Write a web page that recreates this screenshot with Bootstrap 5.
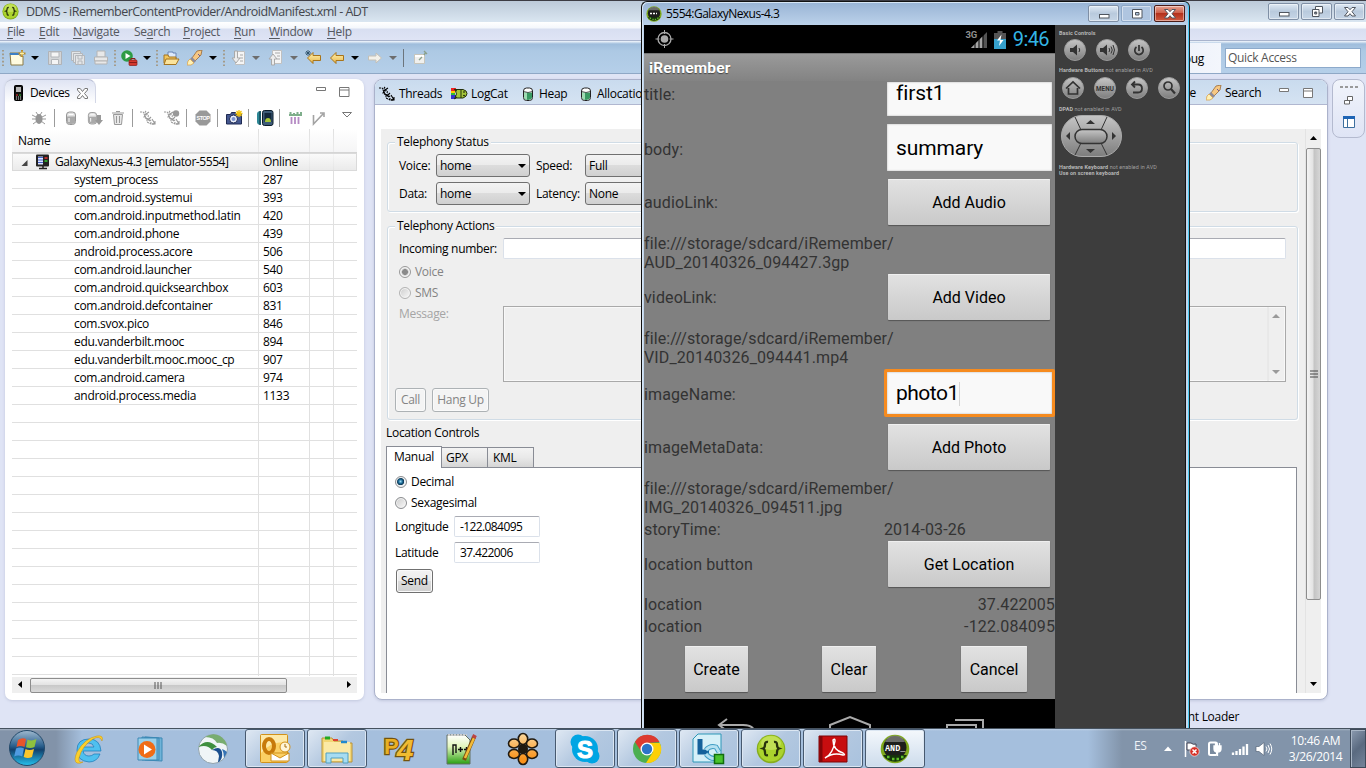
<!DOCTYPE html>
<html lang="en">
<head>
<meta charset="utf-8">
<title>DDMS - ADT</title>
<link rel="stylesheet" href="https://cdn.jsdelivr.net/npm/bootstrap@5.3.0/dist/css/bootstrap.min.css">
<style>
html,body{height:100%;overflow:hidden}
body{width:1366px;height:768px;font:12px/16px "Open Sans","Noto Sans",sans-serif;letter-spacing:-.3px;color:#000;background:#dfe4f5;white-space:nowrap}
svg{display:block;flex:none;overflow:visible}
.titlebar{height:22px;border-top:1px solid #3c3c44;background:linear-gradient(#bccad9,#dae6f1);color:#43464c;font-size:12.5px;letter-spacing:-.52px;padding-left:2px;gap:7px}
.menubar{height:19px;background:linear-gradient(#fff 0,#f4f7fc 6px,#d8dff1 7px,#dfe4f5 100%);border-bottom:1px solid #a9b4cd;color:#55585f;display:grid;grid-template-columns:32px 34px 61px 49px 51px 35px 58px 40px;padding:2px 0 0 7px;align-items:center}
.menubar u{text-underline-offset:2px}
.tool-main{height:33px;background:linear-gradient(#f4f8fd 0,#9fbddc 3px,#adc9e4 10px,#b5cfe9 100%);border-bottom:1px solid #8fa8c6}
.tool-icons{display:grid;grid-template-columns:7px 22px 16px 23px 23px 21px 7px 22px 13px 7px 24px 22px 14px 8px 21px 16px 22px 15px 24px 22px 16px 22px 14px 10px 16px;padding-left:2px;align-items:center;padding-top:2px}
.persp{width:160px;margin-top:2px;background:linear-gradient(90deg,#dfe4f5,#f3f6fc)}
.quick{width:136px;height:20px;background:#fff;border:1px solid #8daacb;color:#555;padding:0 2px;line-height:18px;margin:2px 5px 0 0}
.wb-btn{width:31px;height:17px;border:1px solid #7f8fa5;border-radius:2px;background:linear-gradient(#dfe9f4,#b9cadd 50%,#c6d5e6);box-shadow:inset 0 0 0 1px rgba(255,255,255,.45)}
.wb-btn svg{margin:1px auto 0 7px}
.wb-btn.faded{border-color:#8da7c6;background:#afc5e0}
.wb-btn.closer{background:linear-gradient(#e5a494,#cc5c46 48%,#b4311c 50%,#cf5b40);border-color:#4a1c17}
.wk{height:621px;gap:10px;padding:0 1px 0 5px;margin-top:5px}
.devices{width:359px;background:#fff;border-radius:8px 8px 7px 7px;box-shadow:0 1px 3px #c1c7dd}
.dev-tab{width:91px;height:24px;background:linear-gradient(#dfe4f3,#fff);border-radius:8px 8px 0 0;border-right:1px solid #d3d7e6;border-top:1px solid #b9bfd4;gap:7px;padding:3px 0 0 9px}
.dev-tools{height:29px;display:grid;grid-template-columns:23px 10px 23px 25px 20px 8px 24px 22px 9px 22px 9px 22px 9px 22px 10px 23px 30px 12px;padding-left:26px;align-items:center}
.vbar{width:1px;height:18px;background:#9b9b9b}
.dev-grid{margin:-3px 7px 0;height:547px;background:
 linear-gradient(#e0e0e0,#e0e0e0) 246px 0/1px 100% no-repeat,
 linear-gradient(#e0e0e0,#e0e0e0) 297px 0/1px 100% no-repeat,
 linear-gradient(#e0e0e0,#e0e0e0) 321px 0/1px 100% no-repeat,
 repeating-linear-gradient(transparent 0 17px,#e0e0e0 17px 18px) 0 24px/100% 522px no-repeat}
.dev-grid table{width:345px;table-layout:fixed;border-collapse:separate;border-spacing:0}
.dev-grid td,.dev-grid th{padding:0;height:18px;line-height:16px;font-weight:400;overflow:hidden;vertical-align:top}
.dev-grid td{padding-top:1px}
.dev-grid thead tr{background:linear-gradient(rgba(255,255,255,0),rgba(240,240,241,.7))}
.dev-grid thead th{height:24px;padding:4px 0 0 6px;border-bottom:1px solid #d5d5d5}
.dev-grid td:first-child{padding-left:62px}
.dev-grid tr.sel{background:linear-gradient(rgba(250,250,250,.8),rgba(228,228,228,.8));outline:1px solid #dadada;outline-offset:-1px}
.dev-grid tr.sel td:first-child{padding-left:9px;letter-spacing:-.43px}
.dev-grid td+td{padding-left:5px}
.hscroll{margin:1px 7px 0;height:16px;background:#efefef;padding:0 6px}
.hthumb{width:257px;height:15px;margin-left:7px;border:1px solid #8d8d8d;border-radius:2px;background:linear-gradient(#f4f4f4,#e3e3e3 45%,#c9c9c9 50%,#d9d9d9)}
.editor{width:954px;background:#fff;border:1px solid #abb2cb;border-radius:8px;box-shadow:0 1px 3px #c1c7dd;overflow:hidden}
.ed-tabs{height:25px;background:linear-gradient(#c9dbee,#d5e3f2);border-bottom:1px solid #b0b7d0}
.ed-tabs .lft{display:grid;grid-template-columns:20px 52px 20px 51px 17px 41px 17px 45px;padding-left:4px;align-items:center;padding-top:3px}
.ed-tabs .rgt{display:grid;grid-template-columns:24px 10px 19px 54px 24px 24px;align-items:center;padding-top:2px}
.ed-body{margin:24px 6px 7px;background:#efefef;height:564px}
.ed-form{width:911px;margin-left:6px;padding-top:1px}
.gbox{border:1px solid #d0dce6;border-radius:3px;box-shadow:inset 1px 1px #fff,1px 1px #fff}
.gbox>.cap{display:table;background:#efefef;padding:0 2px;margin:-9px 0 0 7px;line-height:16px}
.status{height:70px;margin-top:12px}
.status .grid4{display:grid;grid-template-columns:37px 100px 49px 94px;row-gap:5px;padding:4px 0 0 11px;align-items:center}
.sel-box{height:23px;width:94px;border:1px solid #707070;border-radius:3px;background:linear-gradient(#f3f3f3,#ebebeb 48%,#dcdcdc 50%,#d0d0d0);padding:0 3px 0 3px}
.actions{height:194px;margin-top:14px}
.fld{background:#fff;border:1px solid #dbe1ea;border-top-color:#a9abb3;border-radius:2px}
.rad{width:12px;height:12px;border:1px solid #8b8d90;border-radius:50%;background:linear-gradient(135deg,#ccc,#fafafa);box-shadow:inset 0 0 0 1px #f4f4f4}
.rad.on{background:radial-gradient(circle at 45% 45%,#9bdcf5 0,#1c6a96 2px,#0c3550 3.4px,#e8eef2 4px)}
.rad.dim{border-color:#b3b3b3}
.rad.dim.on{border-color:#999;background:radial-gradient(circle,#8a8a8a 0 2.6px,#b8b8b8 3px,#f0f0f0 4px)}
.dimmed{color:#838383}
.wbtn{height:24px;border:1px solid #707070;border-radius:3px;background:linear-gradient(#f3f3f3,#ebebeb 48%,#dcdcdc 50%,#d0d0d0);box-shadow:inset 0 0 0 1px #fafafa;text-align:center;line-height:22px}
.wbtn.off{background:#f4f4f4;border-color:#adb2b5;color:#838383}
.msg{width:783px;height:76px;border:1px solid #a9a9a9;margin-top:-1px;box-shadow:inset 0 0 0 1px #f8f8f8;padding:0 1px}
.loc-tab{height:20px;width:47px;border:1px solid #898c95;border-bottom:0;background:linear-gradient(#f3f3f3,#e9e9e9 50%,#d5d5d5);padding-left:4px;line-height:20px;margin-left:-1px}
.loc-tab.cur{height:22px;width:56px;background:#fff;position:relative;margin:0 0 -1px -1px;padding-left:7px;line-height:19px}
.loc-pane{height:226px;width:911px;margin-left:-1px;background:#fff;border:1px solid #898c95;border-bottom:0;padding:6px 0 0 8px}
.vscroll{width:16px;background:#efefef;margin-left:auto;border-left:1px solid #e3e3e3;padding-top:7px}
.vthumb{width:15px;height:452px;margin-top:7px;border:1px solid #8d8d8d;border-radius:2px;background:linear-gradient(90deg,#f4f4f4,#e3e3e3 45%,#c4c4c4 55%,#d6d6d6)}
.fast{width:33px;height:59px;border:1px solid #b4bacf;border-radius:8px;margin-left:-6px;background:linear-gradient(#f1f4fb,#dfe4f5);gap:7px;padding-top:6px}
.statusline{height:28px;padding:9px 127px 0 0}
/* emulator window */
.emu{position:absolute;left:641px;top:1px;width:549px;height:727px;border:1px solid #111;border-bottom:0;border-radius:6px 6px 0 0;background:linear-gradient(#98b3d4,#bdd3eb 24px,#c8daee);border-right-color:#222;box-shadow:inset -1px 0 #47c8f2,inset 1px 1px #d6e5f4;padding:0 2px;overflow:hidden}
.emu-bar{height:23px;gap:4px;padding:0 2px;letter-spacing:-.53px}
.phone{width:411px;height:703px;background:#808080;font-family:Roboto,sans-serif;font-size:16px;line-height:18.6px;letter-spacing:.12px;color:#333}
.droidbar{height:28px;background:#000;color:#33b5e5;font-size:20px;letter-spacing:-.3px;padding:1px 6px 0 11px}
.apptitle{height:28px;background:linear-gradient(#9a9a9a,#838383);border-top:1px solid #777;color:#fff;font-weight:700;font-size:15.5px;line-height:28px;padding-left:5px;text-shadow:0 1px 1px #444}
.prow{height:54px;display:grid;grid-template-columns:243px 1fr;align-items:center}
.prow>span{padding-top:2px}
.dbtn{height:46px;width:162px;margin-left:1px;background:linear-gradient(#e2e2e2,#c9c9c9);box-shadow:0 1px 1px #555,inset 0 1px #efefef;color:#000;text-align:center;line-height:47px;border-radius:1px;letter-spacing:0}
.dfld{height:47px;width:165px;background:#f9f9f9;color:#000;font-size:21px;letter-spacing:-.1px;line-height:48px;padding-left:9px;box-shadow:inset 0 0 2px #aaa}
.dfld.focus{height:48px;width:171px;margin-left:-3px;border:3px solid #f68b1f;border-radius:2px;line-height:42px;padding-left:9px;letter-spacing:-.5px}
.caretline{display:inline-block;width:1px;height:24px;background:#d5d5d5;vertical-align:middle}
.pfile{height:41px;padding-top:6px}
.acts{height:47px;display:grid;grid-template-columns:137px 139px 70px;padding-left:41px}
.acts .dbtn{margin:0}
.navkeys{height:29px;background:#000;margin-top:6px;overflow:hidden;display:grid;grid-template-columns:113px 116px 60px;padding-left:72px}
.side{width:131px;background:#3d3d3d;border-right:1px solid #111;font:bold 5.4px/8px Roboto,sans-serif;letter-spacing:.1px;color:#b8b8b8;padding:4px 0 0 4px}
.side span{font-weight:400;color:#a0a0a0}
.side .keys{display:flex;gap:10px}
/* taskbar */
.taskbar{position:relative;height:40px;border-top:1px solid #46525f;background:linear-gradient(rgba(255,255,255,.3),transparent 2px),linear-gradient(90deg,#8293a9 0,#8293a9 56px,#a5bfdd 82px,#a5bfdd 1088px,#8294aa 1122px);color:#fff}
.orb{width:58px;padding-left:8px}
.task{width:62px;height:39px;display:flex;align-items:center;justify-content:center}
.task.run{width:60px;margin:0 1px;border:1px solid #47596f;border-radius:3px;background:linear-gradient(135deg,#dfe8f3,#b3c8e0 50%,#a9c2de);box-shadow:inset 0 0 0 1px #dbe6f2}
.task.act{background:linear-gradient(#f4f8fc,#cddcec)}
.tray{display:grid;grid-template-columns:30px 17px 24px 24px 24px 24px 73px 16px;align-items:center}
.peek{height:39px;border:1px solid #3e4a5a;box-shadow:inset 1px 1px #a9b6c6;background:linear-gradient(135deg,#8c9bb0,#5a6a80 50%,#74849a)}
</style>
</head>
<body>
<svg width="0" height="0" class="position-absolute">
 <defs>
  <linearGradient id="gKey" x2="0" y2="1"><stop offset="0" stop-color="#c6c6c6"/><stop offset="1" stop-color="#7d7d7d"/></linearGradient>
  <linearGradient id="gGold" x2="0" y2="1"><stop offset="0" stop-color="#fff3b0"/><stop offset="1" stop-color="#e8b54a"/></linearGradient>
  <linearGradient id="gOrb" x2="0" y2="1"><stop offset="0" stop-color="#9fb9cf"/><stop offset=".45" stop-color="#285e8c"/><stop offset=".55" stop-color="#12406c"/><stop offset="1" stop-color="#25c2ef"/></linearGradient>
  <linearGradient id="gGreen" x2="0" y2="1"><stop offset="0" stop-color="#fff"/><stop offset=".4" stop-color="#e2f6bd"/><stop offset="1" stop-color="#2aa012"/></linearGradient>
  <linearGradient id="gFlow" gradientUnits="userSpaceOnUse" x1="0" x2="0" y1="-15" y2="10"><stop offset="0" stop-color="#fbd79c"/><stop offset="1" stop-color="#f9921a"/></linearGradient>
  <symbol id="caret" viewBox="0 0 8 16"><path d="M0 6h8L4 10z" fill="currentColor"/></symbol>
  <symbol id="dots" viewBox="0 0 2 16"><path d="M1 0v16" stroke="#a08f74" stroke-width="1.6" stroke-dasharray="1.6 2"/></symbol>
  <symbol id="back" viewBox="0 0 16 16"><path d="M1.500 8 7 2.500v3h7.500v5H7v3z" fill="url(#gGold)" stroke="#a8741a"/></symbol>
  <symbol id="rocket" viewBox="0 0 16 16"><path d="M10 1l5-1-1 5-6 6-3-3z" fill="#f6c884" stroke="#9a6a35" stroke-width=".8"/><path d="M5 7l4 4-2 2-4-4z" fill="#8e8c9a"/><path d="M3 9l4 4-3 2-4 0 1-4z" fill="#fff1b5" stroke="#d99b3e" stroke-width=".7"/><path d="M11 4l2 2" stroke="#6b5a9a"/></symbol>
  <symbol id="threads" viewBox="0 0 16 16"><g fill="none" stroke="currentColor" stroke-width="1.1"><path d="M0 2h3l3 3-2 2 3 2v3l4 2h4M6 1c-3 3 4 3 2 6s4 2 3 5 2 2 4 1" stroke-dasharray="2 .8"/><path d="M9 2l-3 2M4 4l2 4 4 3M12 9l3 5M15 11v3h-3M8 10l3-3"/></g></symbol>
  <symbol id="can" viewBox="0 0 12 16"><rect x="1.500" y="2" width="9" height="12.500" rx="3" fill="#fff" stroke="#222"/><path d="M2 6.500h8V12q-1 2-4 2t-4-2z" fill="#3a9a63"/><path d="M2 7h3v6.500q-2 0-3-2z" fill="#9fdcb4"/><path d="M2 5.500q4 2 8 0" stroke="#222" fill="none" stroke-width=".7"/></symbol>
  <symbol id="greycan" viewBox="0 0 12 16"><rect x="1.500" y="2" width="9" height="12.500" rx="3" fill="#e2e2e2" stroke="#969696"/><path d="M2 6.500h8V13q-4 2-8 0z" fill="#aaa"/><path d="M3.500 4.500h5M4 8v4" stroke="#fff"/></symbol>
  <symbol id="braces" viewBox="0 0 30 30"><circle cx="15" cy="15" r="14.300" fill="#86ad1d"/><circle cx="15" cy="14.500" r="13" fill="#abd32d"/><ellipse cx="15" cy="9" rx="10" ry="7" fill="#d0ea70" opacity=".6"/><path d="M12 8q-3-.5-3 2.500c0 3-.5 3.500-2 4 1.500.5 2 1 2 4 0 3 1 3 3 2.700M18 8q3-.5 3 2.500c0 3 .5 3.500 2 4-1.500.5-2 1-2 4 0 3-1 3-3 2.700" fill="none" stroke="#29330c" stroke-width="2.300"/></symbol>
  <symbol id="emulogo" viewBox="0 0 30 30"><circle cx="15" cy="15" r="14.300" fill="#7faa1c"/><circle cx="15" cy="13.500" r="11.500" fill="#1d1f1c"/><path d="M5 8a11 11 0 0 1 20 0z" fill="#8b8d8a" opacity=".7"/><path d="M3 21h24a14 14 0 0 1-24 0z" fill="#15330c"/><path d="M7 23h2.500M12 25h2.500M16.500 25H19M21 23h2.500" stroke="#5fbf2a" stroke-width="2.500"/></symbol>
  <symbol id="wmin" viewBox="0 0 16 14"><rect x="3.500" y="7.500" width="9.500" height="3.500" fill="#fff" stroke="#50565f"/></symbol>
  <symbol id="wmax" viewBox="0 0 16 14"><path d="M3.500 2.500h9.500v8.500H3.500zM6.500 5.500h3.500v2.500H6.500z" fill="#fff" fill-rule="evenodd" stroke="#50565f"/></symbol>
  <symbol id="wres" viewBox="0 0 16 14"><path d="M6.500 1.500h7v6.500h-7z" fill="#fff" stroke="#50565f"/><path d="M3.500 4.500h6.500v7H3.500zM5.700 7h2v2h-2z" fill="#fff" fill-rule="evenodd" stroke="#50565f"/></symbol>
  <symbol id="wx" viewBox="0 0 16 14"><path d="M2.500 2.500h3.500L8 4.700l2-2.200h3.500L10 6.700l3.500 4.300H10L8 8.700 6 11H2.500L6 6.700z" fill="#fff" stroke="#50565f"/></symbol>
 </defs>
</svg>

<div class="titlebar d-flex align-items-center">
 <svg width="17" height="17"><use href="#braces"/></svg><span>DDMS - iRememberContentProvider/AndroidManifest.xml - ADT</span>
 <div class="d-flex ms-auto" style="gap:2px;margin-right:1px">
  <div class="wb-btn"><svg width="16" height="14"><use href="#wmin"/></svg></div>
  <div class="wb-btn"><svg width="16" height="14"><use href="#wres"/></svg></div>
  <div class="wb-btn"><svg width="16" height="14"><use href="#wx"/></svg></div>
 </div>
</div>
<div class="menubar"><span><u>F</u>ile</span><span><u>E</u>dit</span><span><u>N</u>avigate</span><span>Se<u>a</u>rch</span><span><u>P</u>roject</span><span><u>R</u>un</span><span><u>W</u>indow</span><span><u>H</u>elp</span></div>
<div class="tool-main d-flex justify-content-between">
 <div class="tool-icons">
  <svg width="2" height="16"><use href="#dots"/></svg>
  <svg width="16" height="16"><path d="M1 3h10v3h3v9H2z" fill="#fffbe0" stroke="#8b7a46"/><path d="M1 3h9v2H1z" fill="#3d7fc4"/><path d="M13 0v7M9.500 3.500h7" stroke="#b58a2e" stroke-width="2"/><path d="M13 1.500v4M11 3.500h4" stroke="#fff3a0"/></svg>
  <svg width="8" height="16"><use href="#caret"/></svg>
  <svg width="16" height="16"><path d="M1.500 1.500h13v13h-13z" fill="#d4d6d8" stroke="#b0b3b7"/><path d="M4 2h8v5H4zM4.500 9.500h7v5h-7z" fill="#f5f5f5" stroke="#b2b5b9"/></svg>
  <svg width="16" height="16" fill="#e3e5e7" stroke="#b4b7bb"><path d="M1.500 1.500h9v9h-9z"/><path d="M3.500 3.500h9v9h-9z"/><path d="M5.500 5.500h9v9h-9z"/><path d="M8 6v3h4V6M8 14v-3h4v3"/></svg>
  <svg width="16" height="16" fill="#e8e8e8" stroke="#b4b4b4"><path d="M4 1h8v6H4z"/><path d="M1.500 7h13v4h-13z"/><path d="M2 11h12v3H2z"/></svg>
  <svg width="2" height="16"><use href="#dots"/></svg>
  <svg width="17" height="16"><circle cx="6" cy="6" r="5.800" fill="#2d9b45"/><path d="M4.500 3l5 3-5 3z" fill="#fff"/><rect x="8" y="10" width="8" height="5.500" rx="1" fill="#d3392f" stroke="#8a1d18" stroke-width=".7"/><path d="M10 10V8.500h4V10M8 12.500h8" stroke="#8a1d18" fill="none"/></svg>
  <svg width="8" height="16"><use href="#caret"/></svg>
  <svg width="2" height="16"><use href="#dots"/></svg>
  <svg width="16" height="16"><path d="M5 5V2h5v1h3v6H5z" fill="#dce9fa" stroke="#6984b5"/><path d="M1 5h4l1 2h7v6H1z" fill="#f2c65c" stroke="#a57520"/><path d="M3 9h13l-3 5.500H1z" fill="#fbe39b" stroke="#a57520"/></svg>
  <svg width="16" height="16"><use href="#rocket"/></svg>
  <svg width="8" height="16"><use href="#caret"/></svg>
  <svg width="2" height="16"><use href="#dots"/></svg>
  <svg width="16" height="16"><path d="M4.500 1.500h9v13h-9z" fill="#f5f5f5" stroke="#c0c0c0"/><path d="M9 5h3M9 8h3M9 11h3" stroke="#a9a9a9"/><path d="M3.500 1h3v7H9l-4 5-4-5h2.500z" fill="#ececec" stroke="#a9a9a9"/></svg>
  <svg width="8" height="16" color="#6d6d6d"><use href="#caret"/></svg>
  <svg width="16" height="16"><path d="M4.500.5h9v13h-9z" fill="#f5f5f5" stroke="#c0c0c0"/><path d="M7 3h5M9 6h3M9 9h3" stroke="#a9a9a9"/><path d="M3.500 15h3V9H9L5 4 1 9h2.500z" fill="#ececec" stroke="#a9a9a9"/></svg>
  <svg width="8" height="16" color="#6d6d6d"><use href="#caret"/></svg>
  <svg width="17" height="16"><use href="#back" x="1" width="16" height="16"/><path d="M3 0v6M0 3h6M1 1l4 4M5 1L1 5" stroke="#23485f" stroke-width=".8"/></svg>
  <svg width="16" height="16"><use href="#back"/></svg>
  <svg width="8" height="16"><use href="#caret"/></svg>
  <svg width="16" height="16"><path d="M14.500 8 9 3v3H1.500v4H9v3z" fill="#f3f1ea" stroke="#c4c0b6"/></svg>
  <svg width="8" height="16" color="#6d6d6d"><use href="#caret"/></svg>
  <span class="vbar bg-secondary"></span>
  <svg width="16" height="16"><path d="M1.500 4.500h10v9h-10z" fill="#f0f0ee" stroke="#c7c5bb"/><path d="M2 6h9" stroke="#fff" stroke-width="2"/><path d="M6 10l3-3M11 5l2-3M11 1l3 3" stroke="#8ba08c" stroke-width="1.400"/></svg>
 </div>
 <div class="d-flex">
  <div class="persp d-flex"><span class="ms-auto mt-2" style="padding-right:17px">Debug</span></div>
  <div class="d-flex align-items-center ps-1"><div class="quick">Quick Access</div></div>
 </div>
</div>

<div class="wk d-flex">
 <section class="devices">
  <div class="d-flex justify-content-between">
   <div class="dev-tab d-flex align-items-center">
    <svg width="9" height="16"><rect x=".5" y=".5" width="8" height="15" rx="1" fill="#111" stroke="#000"/><path d="M2 2h5v5H2z" fill="#b9b9b9"/><path d="M2 10h2" stroke="#e33"/><path d="M5 10h2" stroke="#3c3"/><path d="M2 12h5M2 14h5" stroke="#ddd" stroke-dasharray="1 1"/></svg>
    <span style="letter-spacing:-.45px">Devices</span>
    <svg width="11" height="11"><path d="M.5.5h2.700L5.500 3.500 7.800.5h2.700v1.500L7.500 5.500l3 3.500v1.500H7.800L5.500 7.500l-2.300 3H.5V9l3-3.500-3-3.500z" fill="#fff" stroke="#777"/></svg>
   </div>
   <svg width="48" height="24"><path d="M.5 8.500h9v3h-9zM23.500 8.500h9.500v9h-9.500zM23.500 11h9.500" fill="#fff" stroke="#777"/></svg>
  </div>
  <div class="dev-tools">
   <svg width="16" height="16"><path d="M5 2l2 3M11 2L9 5M1 5l4 2M15 5l-4 2M1 9h14M2 14l4-3M14 14l-4-3" stroke="#999"/><ellipse cx="8" cy="9" rx="3.500" ry="5" fill="#949494"/></svg>
   <span class="vbar"></span>
   <svg width="14" height="16"><use href="#greycan"/></svg>
   <svg width="16" height="16"><use href="#greycan" width="11"/><path d="M10 5h4v5h2l-4 5-4-5h2z" fill="#999"/></svg>
   <svg width="12" height="16"><path d="M1.500 4.500h9l-1 10h-7zM0 3h12M4 1.500h4M4.500 6v7M7.500 6v7" fill="#e8e8e8" stroke="#999"/></svg>
   <span class="vbar"></span>
   <svg width="16" height="16" color="#999"><use href="#threads"/></svg>
   <svg width="16" height="16" color="#999"><use href="#threads"/><circle cx="12" cy="3.500" r="3.200" fill="#999"/></svg>
   <span class="vbar"></span>
   <svg width="16" height="16"><path d="M4.500.5h7l4 4v7l-4 4h-7l-4-4v-7z" fill="#999"/><text x="1.500" y="10.300" font-size="5.500" font-weight="700" fill="#fff" font-family="Liberation Sans,sans-serif" textLength="13">STOP</text></svg>
   <span class="vbar"></span>
   <svg width="16" height="16"><path d="M.5 4.500h4l1-2h4l1 2h5v9.500H.5z" fill="#44578f" stroke="#1f2a52"/><circle cx="7.500" cy="9" r="4" fill="#eef2fb" stroke="#1f2a52"/><circle cx="7.500" cy="9" r="2" fill="#7b93cf"/><path d="M13 0v7M9.500 3.500h7M10.500 1l5 5M15.500 1l-5 5" stroke="#f2c40e" stroke-width="1.300"/></svg>
   <span class="vbar"></span>
   <svg width="17" height="16"><path d="M4 1Q0 1 0 4v8q0 3 4 3z" fill="#2c8795"/><path d="M3 1v14" stroke="#0b2b3b"/><rect x="5.500" y=".5" width="10.500" height="15" rx="2" fill="#3e5c78" stroke="#0b1c2b"/><path d="M7.500 3h7v9h-7z" fill="#13283d"/><path d="M8 12q0-4 3-4t3 4z" fill="#a4c639"/></svg>
   <span class="vbar"></span>
   <svg width="14" height="16"><path d="M1.500 2v4M5 3v3M8.500 2v4M12 2v4M0 5h13" stroke="#7fae8b" stroke-width="2"/><path d="M2.500 7v7M6 7v7M9.500 7v7" stroke="#b58ac4" stroke-width="1.800"/></svg>
   <svg width="14" height="16"><path d="M1.500 5v9L11 4M8 3h4v4" fill="none" stroke="#a3a3a3" stroke-width="1.600"/></svg>
   <svg width="10" height="16"><path d="M.5 2.500h9L5 7z" fill="#fff" stroke="#777"/></svg>
  </div>
  <div class="dev-grid">
   <table>
    <colgroup><col style="width:246px"><col></colgroup>
    <thead><tr><th>Name</th><th></th></tr></thead>
    <tbody>
     <tr class="sel"><td><div class="d-flex align-items-center"><svg width="7" height="7"><path d="M6.500 1v6H.5z" fill="#444"/></svg><svg width="16" height="16" style="margin:0 4px 0 7px"><rect x="1" y=".5" width="13" height="12" rx="1" fill="#222"/><path d="M3 2.500h5v8H3z" fill="#dfe6ff"/><path d="M3 3.500h5M3 6h5M3 8.500h5" stroke="#4560c9"/><path d="M9.500 4h3" stroke="#e33" stroke-width="1.500"/><path d="M9.500 7h3" stroke="#3c3" stroke-width="1.500"/><path d="M4 14.500h8M8 12v2" stroke="#222" stroke-width="1.500"/></svg><span>GalaxyNexus-4.3 [emulator-5554]</span></div></td><td>Online</td></tr>
     <tr><td>system_process</td><td>287</td></tr>
     <tr><td>com.android.systemui</td><td>393</td></tr>
     <tr><td>com.android.inputmethod.latin</td><td>420</td></tr>
     <tr><td>com.android.phone</td><td>439</td></tr>
     <tr><td>android.process.acore</td><td>506</td></tr>
     <tr><td>com.android.launcher</td><td>540</td></tr>
     <tr><td>com.android.quicksearchbox</td><td>603</td></tr>
     <tr><td>com.android.defcontainer</td><td>831</td></tr>
     <tr><td>com.svox.pico</td><td>846</td></tr>
     <tr><td>edu.vanderbilt.mooc</td><td>894</td></tr>
     <tr><td>edu.vanderbilt.mooc.mooc_cp</td><td>907</td></tr>
     <tr><td>com.android.camera</td><td>974</td></tr>
     <tr><td>android.process.media</td><td>1133</td></tr>
    </tbody>
   </table>
  </div>
  <div class="hscroll d-flex align-items-center">
   <svg width="5" height="8"><path d="M4 0v7L0 3.500z"/></svg>
   <div class="hthumb d-flex align-items-center justify-content-center"><svg width="9" height="7"><path d="M1 0v7M4 0v7M7 0v7" stroke="#555"/></svg></div>
   <svg width="5" height="8" class="ms-auto"><path d="M1 0v7l4-3.500z"/></svg>
  </div>
 </section>

 <section class="editor">
  <div class="ed-tabs d-flex justify-content-between">
   <div class="lft">
    <svg width="16" height="16"><use href="#threads"/></svg><span>Threads</span>
    <svg width="17" height="16"><path d="M0 2h5v3H0z" fill="#e22"/><path d="M0 5h4v2H0z" fill="#fc0"/><path d="M0 7h4v2H0z" fill="#3b3"/><path d="M0 9h5v4H0z" fill="#33c"/><path d="M4 3.500h8q4 1 4 4t-4 4.500H4q3-4 0-8.500z" fill="#a4c639" stroke="#22300a"/><path d="M3 3l3 2M3 13l3-2M10 4v8" stroke="#22300a"/><circle cx="13" cy="6" r=".8"/><circle cx="13" cy="9.500" r=".8"/></svg><span>LogCat</span>
    <svg width="12" height="16"><use href="#can"/></svg><span>Heap</span>
    <svg width="12" height="16"><use href="#can"/></svg><span>Allocatio</span>
   </div>
   <div class="rgt">
    <span class="text-end">e</span><span></span><svg width="16" height="16"><use href="#rocket"/></svg><span>Search</span>
    <svg width="10" height="16"><path d="M.5 3.500h9v3h-9z" fill="#fff" stroke="#777"/></svg>
    <svg width="10" height="16"><path d="M.5 3.500h9v9h-9zM.5 6h9" fill="#fff" stroke="#777"/></svg>
   </div>
  </div>
  <div class="ed-body d-flex">
   <div class="ed-form">
    <div class="gbox status">
     <div class="cap">Telephony Status</div>
     <div class="grid4">
      <span>Voice:</span><div class="sel-box d-flex align-items-center justify-content-between">home<svg width="8" height="16"><use href="#caret"/></svg></div><span>Speed:</span><div class="sel-box d-flex align-items-center justify-content-between">Full<svg width="8" height="16"><use href="#caret"/></svg></div>
      <span>Data:</span><div class="sel-box d-flex align-items-center justify-content-between">home<svg width="8" height="16"><use href="#caret"/></svg></div><span>Latency:</span><div class="sel-box d-flex align-items-center justify-content-between">None<svg width="8" height="16"><use href="#caret"/></svg></div>
     </div>
    </div>
    <div class="gbox actions">
     <div class="cap">Telephony Actions</div>
     <div class="d-flex align-items-center" style="padding:4px 0 0 11px"><span style="width:104px">Incoming number:</span><div class="fld" style="width:783px;height:21px"></div></div>
     <div class="d-flex align-items-center dimmed gap-1" style="padding-left:11px;height:26px"><i class="rad dim on"></i>Voice</div>
     <div class="d-flex align-items-center dimmed gap-1" style="padding-left:11px;height:16px"><i class="rad dim"></i>SMS</div>
     <div class="d-flex" style="padding:6px 0 0 11px"><span style="width:104px;color:#a5a5a5;margin-top:-1px">Message:</span>
      <div class="msg d-flex"><svg width="16" height="74" class="ms-auto"><path d="M0 0v74" stroke="#e2e2e2"/><path d="M4 11h8L8 7z" fill="#999"/><path d="M4 63h8l-4 4z" fill="#999"/></svg></div></div>
     <div class="d-flex" style="padding:6px 0 0 7px;gap:6px"><div class="wbtn off" style="width:31px">Call</div><div class="wbtn off" style="width:57px">Hang Up</div></div>
    </div>
    <div style="margin:5px 0 5px -1px">Location Controls</div>
    <div class="d-flex align-items-end"><div class="loc-tab cur">Manual</div><div class="loc-tab">GPX</div><div class="loc-tab" style="width:47px;padding-left:5px">KML</div></div>
    <div class="loc-pane">
     <div class="d-flex align-items-center gap-1" style="height:16px"><i class="rad on"></i>Decimal</div>
     <div class="d-flex align-items-center gap-1" style="height:26px"><i class="rad"></i>Sexagesimal</div>
     <div class="d-flex align-items-center"><span style="width:59px">Longitude</span><div class="fld" style="width:86px;height:21px;line-height:20px;letter-spacing:-.6px;padding-left:5px">-122.084095</div></div>
     <div class="d-flex align-items-center" style="margin-top:5px"><span style="width:59px">Latitude</span><div class="fld" style="width:86px;height:21px;line-height:20px;letter-spacing:-.6px;padding-left:5px">37.422006</div></div>
     <div class="wbtn" style="width:37px;margin:6px 0 0 1px">Send</div>
    </div>
   </div>
   <div class="vscroll d-flex flex-column align-items-center">
    <svg width="8" height="5"><path d="M0 4h7L3.500 0z"/></svg>
    <div class="vthumb d-flex align-items-center justify-content-center"><svg width="8" height="9"><path d="M0 1h8M0 4h8M0 7h8" stroke="#444"/></svg></div>
    <svg width="8" height="5" class="mt-auto" style="margin-bottom:6px"><path d="M0 0h7L3.500 4z"/></svg>
   </div>
  </div>
 </section>
 <div class="fast d-flex flex-column align-items-center">
  <svg width="18" height="3"><path d="M0 1h18" stroke="#9a9a9a" stroke-width="2" stroke-dasharray="3 2"/></svg>
  <svg width="9" height="9"><path d="M3.500.5h5v4h-5zM.5 4.500h5v3.500h-5z" fill="#fff" stroke="#666"/></svg>
  <svg width="12" height="12" class="mt-1"><path d="M.5.500h11v11H.5z" fill="#fff" stroke="#3d6f9e"/><path d="M0 1.500h12" stroke="#1e64b4" stroke-width="3"/><path d="M4.500 3v8.500" stroke="#3d6f9e"/></svg>
 </div>
</div>
<div class="statusline text-end">nt Loader</div>

<section class="emu">
 <div class="emu-bar d-flex align-items-center">
  <svg width="16" height="16"><use href="#emulogo"/><path d="M4 7.500h7" stroke="#fff" stroke-width="1.500" stroke-dasharray="2 1"/></svg><span>5554:GalaxyNexus-4.3</span>
  <div class="d-flex ms-auto" style="gap:2px"><div class="wb-btn"><svg width="16" height="14"><use href="#wmin"/></svg></div><div class="wb-btn faded"><svg width="16" height="14"><use href="#wmax"/></svg></div><div class="wb-btn closer"><svg width="16" height="14"><use href="#wx"/></svg></div></div>
 </div>
 <div class="d-flex">
  <div class="phone">
   <div class="droidbar d-flex align-items-center">
    <svg width="20" height="20"><circle cx="9.500" cy="9" r="6.500" fill="none" stroke="#aaa" stroke-width="1.300"/><circle cx="9.500" cy="9" r="3.800" fill="#aaa"/><path d="M9.500 0v4M9.500 14v4M.5 9h4M14.500 9h4" stroke="#aaa"/></svg>
    <span class="ms-auto" style="font-size:9.500px;font-weight:700;color:#8f8f8f;margin-top:-9px">3G</span>
    <svg width="17" height="18" style="margin-left:-6px"><path d="M16 1v16H0z" fill="#555"/><path d="M11.500 5.500V17H0z" fill="#a5a5a5"/><path d="M4 10v7M8 6v11M12 2v15" stroke="#000"/></svg>
    <svg width="12" height="18" style="margin:0 7px 0 6px"><path d="M3.500 0h5v2H12v6H0V2h3.500z" fill="#555"/><path d="M0 8h12v10H0z" fill="#35a0cc"/><path d="M7.500 3.500L3 9.500h3L5 15l4.500-6h-3z" fill="#fff"/></svg>
    <span style="letter-spacing:-.6px">9:46</span>
   </div>
   <div class="apptitle">iRemember</div>
   <div class="prow" style="height:39px;align-items:start"><span style="margin-top:3px">title:</span><div class="dfld" style="height:34px;line-height:22px;margin-top:1px">first1</div></div>
   <div class="prow" style="height:55px"><span style="padding-top:6px">body:</span><div class="dfld">summary</div></div>
   <div class="prow"><span>audioLink:</span><div class="dbtn">Add Audio</div></div>
   <div class="pfile">file:///storage/sdcard/iRemember/<br>AUD_20140326_094427.3gp</div>
   <div class="prow"><span>videoLink:</span><div class="dbtn">Add Video</div></div>
   <div class="pfile" style="height:42px">file:///storage/sdcard/iRemember/<br>VID_20140326_094441.mp4</div>
   <div class="prow"><span class="pt-1">imageName:</span><div class="dfld focus">photo1<i class="caretline"></i></div></div>
   <div class="prow"><span>imageMetaData:</span><div class="dbtn">Add Photo</div></div>
   <div class="pfile" style="height:45px">file:///storage/sdcard/iRemember/<br>IMG_20140326_094511.jpg</div>
   <div class="prow" style="height:19px;grid-template-columns:240px 1fr"><span>storyTime:</span><span>2014-03-26</span></div>
   <div class="prow" style="height:52px"><span>location button</span><div class="dbtn">Get Location</div></div>
   <div class="d-flex justify-content-between" style="padding-top:6px;height:28px"><span>location</span><span>37.422005</span></div>
   <div class="d-flex justify-content-between" style="height:28px"><span>location</span><span>-122.084095</span></div>
   <div class="acts"><div class="dbtn" style="width:63px">Create</div><div class="dbtn" style="width:54px">Clear</div><div class="dbtn" style="width:66px">Cancel</div></div>
   <div class="navkeys">
    <svg width="40" height="29"><path d="M11 20L3 26l8 6M3 26h24q9 0 11 5" fill="none" stroke="#aaa" stroke-width="2"/></svg>
    <svg width="42" height="29"><path d="M1 31v-5L21 18l20 8v5" fill="none" stroke="#aaa" stroke-width="2"/></svg>
    <svg width="42" height="29"><path d="M10 21h28v12M2 34v-8h29v8" fill="none" stroke="#aaa" stroke-width="2"/></svg>
   </div>
  </div>
  <div class="side">
   Basic Controls
   <div class="keys" style="margin:2px 0 8px 5px">
    <svg width="22" height="22"><circle cx="11" cy="11" r="10.500" fill="url(#gKey)" stroke="#999"/><path d="M6 9h3l4-3.500v11L9 13H6z" fill="#333"/><path d="M15 9q1.500 2 0 4" fill="none" stroke="#333"/></svg>
    <svg width="22" height="22"><circle cx="11" cy="11" r="10.500" fill="url(#gKey)" stroke="#999"/><path d="M4 9h3l4-3.500v11L7 13H4z" fill="#333"/><path d="M13 9q1.500 2 0 4M15 7.500q2.500 3.500 0 7M17 6q3 5 0 10" fill="none" stroke="#333"/></svg>
    <svg width="22" height="22"><circle cx="11" cy="11" r="10.500" fill="url(#gKey)" stroke="#999"/><path d="M11 6v6M8.500 8a4.200 4.200 0 1 0 5 0" fill="none" stroke="#333" stroke-width="1.700"/></svg>
   </div>
   <div style="margin-top:-3px">Hardware Buttons <span>not enabled in AVD</span></div>
   <div class="keys" style="margin:3px 0 0 3px">
    <svg width="22" height="22"><circle cx="11" cy="11" r="10.500" fill="url(#gKey)" stroke="#999"/><path d="M4 11.500L11 5l7 6.500M6.500 11v6h9v-6" fill="none" stroke="#333" stroke-width="1.700"/></svg>
    <svg width="22" height="22"><circle cx="11" cy="11" r="10.500" fill="url(#gKey)" stroke="#999"/><text x="2" y="13.500" font-size="7" font-weight="700" fill="#333" textLength="18" lengthAdjust="spacingAndGlyphs">MENU</text></svg>
    <svg width="22" height="22"><circle cx="11" cy="11" r="10.500" fill="url(#gKey)" stroke="#999"/><path d="M9 4.500L6 7.500l3 3M6 7.500h6q4 0 4 4t-4 4H7" fill="none" stroke="#333" stroke-width="1.800"/></svg>
    <svg width="22" height="22"><circle cx="11" cy="11" r="10.500" fill="url(#gKey)" stroke="#999"/><circle cx="10" cy="9" r="4" fill="none" stroke="#333" stroke-width="1.700"/><path d="M13 12l4 4.500" stroke="#333" stroke-width="2.200"/></svg>
   </div>
   <div style="margin-top:6px">DPAD <span>not enabled in AVD</span></div>
   <svg width="61" height="43" style="margin:2px 0 5px 2px"><rect x=".5" y=".5" width="60" height="41" rx="20.500" fill="url(#gKey)" stroke="#aaa"/><path d="M14 2l6 13M46 2l-6 13M14 40l6-12M46 40l-6-12" stroke="#333"/><rect x="14" y="14.500" width="32" height="14" rx="7" fill="url(#gKey)" stroke="#333" stroke-width="1.500"/><path d="M25 9h9l-4.500-4zM25 34h9l-4.500 4zM9 17v8l-4-4zM51 17v8l4-4z" fill="#333"/></svg>
   <div style="line-height:6px;margin-top:6px">Hardware Keyboard <span>not enabled in AVD</span><br>Use on screen keyboard</div>
  </div>
 </div>
</section>

<footer class="taskbar d-flex">
 <div class="orb"><svg width="38" height="38"><circle cx="19" cy="19" r="17.500" fill="url(#gOrb)" stroke="#244a6b"/><path d="M10 11q4-3 8-1l-1.500 8q-4-2-8 0z" fill="#e8552b"/><path d="M19.500 10.500q4 2 9-.5l-2 8q-4 2-8.500.3z" fill="#8fc13e"/><path d="M8 19.500q4-2 8 0l-1.800 8q-4-2-8 0z" fill="#4f9be0"/><path d="M17.500 20q4 2 8.500 0l-2 8q-4 2-8.300 0z" fill="#fbc72d"/></svg></div>
 <div class="task"><svg width="32" height="32"><path d="M28 18H10q1 5 6 5 3 0 5-2h6q-3 8-11 8-12-1-12-12T16 6q11 0 12 12zM10 14h11q-1-4-5.500-4T10 14z" fill="#4fc0ef" stroke="#1979b8" stroke-width=".7"/><path d="M29 8q2-6-5-5Q12 5 4 19q-4 9 0 11 3 1 6-1-5 1-4-4Q9 13 20 6q7-4 9 2z" fill="#fbd02c" stroke="#c58c10" stroke-width=".5"/></svg></div>
 <div class="task"><svg width="30" height="30"><path d="M9 3l17 1v23L9 26zM6 3l17 1v22L6 26z" fill="#6fb3d8" stroke="#3d89b5"/><path d="M2 4h19v22H2z" fill="#9ad0ea" stroke="#3d89b5"/><circle cx="11" cy="15.500" r="8.500" fill="#f06c16"/><path d="M8 10.500l8 5-8 5z" fill="#fff"/></svg></div>
 <div class="task"><svg width="32" height="32"><circle cx="16" cy="16" r="14.500" fill="#f0f5f7" stroke="#91a3ad"/><path d="M1.500 14Q10 4 20 14q-3 0-5 3-5-6-13.500-3z" fill="#3e8f3f"/><path d="M8 4q8-5 15-1 6 4 7 10-5-4-10-3Q17 4 8 4z" fill="#78ad70"/><path d="M15 17q8-5 10 2 1 6-3 10l-1 0 1-6q-1-6-7-6z" fill="#1b4f8e"/><path d="M25 16q3 1 5 3-1 3-3 6 0-5-2-9z" fill="#3573b4"/></svg></div>
 <div class="task run"><svg width="32" height="32"><rect x="1.500" y="1.500" width="27" height="28" rx="1" fill="#fbd064" stroke="#d1911a"/><path d="M2 2h26v7Q12 8 2 20z" fill="#fde9a8"/><ellipse cx="10" cy="13" rx="5" ry="7" fill="none" stroke="#c77a0b" stroke-width="4"/><circle cx="26" cy="14" r="5" fill="#fff5d8" stroke="#d1911a"/><path d="M26 11v3h2" stroke="#a86f10" fill="none"/><path d="M12 20h18v8H12zM12 20l9 5 9-5" fill="#fff" stroke="#d1911a"/></svg></div>
 <div class="task run"><svg width="32" height="32"><path d="M1 5h10l2 3h9l2 2h7v19H1z" fill="#f3d675" stroke="#b7923a"/><path d="M3 9h26v19H3z" fill="#fbe9a6"/><path d="M4 5h5" stroke="#2a2" stroke-width="3"/><path d="M12 7h5" stroke="#d43" stroke-width="2"/><path d="M20 9h6" stroke="#28c" stroke-width="2.500"/><path d="M5 30V20h22v10h-5v-5H10v5z" fill="#a6dcf2" stroke="#519fc0"/></svg></div>
 <div class="task"><svg width="32" height="32"><text x="1" y="21" font-size="22" font-family="Liberation Sans,sans-serif" font-weight="700" paint-order="stroke" stroke="#73530d" stroke-width="2.500" fill="#e9b024" letter-spacing="-2">P<tspan dy="6" font-size="30" font-style="italic" fill="#f0bb32">4</tspan></text></svg></div>
 <div class="task"><svg width="32" height="34"><path d="M2 3h18l5 5v24H2z" fill="url(#gGreen)" stroke="#647064"/><path d="M3 3h19" stroke="#ccc" stroke-width="2" stroke-dasharray="2 1"/><path d="M8 23V13h3v8M13 17.500h5M15.500 15v5M19 17.500h5M21.500 15v5" fill="none" stroke="#111" stroke-width="1.400"/><path d="M29 5L19 28" stroke="#7a4d10" stroke-width="4"/><path d="M29 6L20 26" stroke="#f2bb38" stroke-width="2.500"/><path d="M30 3l-1.500 3" stroke="#b44" stroke-width="4"/></svg></div>
 <div class="task"><svg width="32" height="34" viewBox="-16 -17 32 34"><g fill="url(#gFlow)" stroke="#211a10" stroke-width="1.600"><ellipse cy="-10" rx="4.700" ry="5.500"/><ellipse cx="9" cy="-5.500" rx="5.500" ry="4.500"/><ellipse cx="9" cy="5" rx="5.500" ry="4.500"/><ellipse cy="10" rx="4.700" ry="5.500"/><ellipse cx="-9" cy="5" rx="5.500" ry="4.500"/><ellipse cx="-9" cy="-5.500" rx="5.500" ry="4.500"/></g><circle r="5" fill="#211a10"/></svg></div>
 <div class="task run"><svg width="32" height="32"><g fill="#00a5e3"><circle cx="16" cy="16" r="13"/><circle cx="9" cy="9" r="7.500"/><circle cx="23" cy="23" r="7.500"/></g><text x="8" y="24.500" font-size="24" font-weight="700" fill="#fff" stroke="#fff" font-family="Liberation Sans,sans-serif">S</text></svg></div>
 <div class="task run"><svg width="30" height="30"><circle cx="15" cy="15" r="14" fill="#4caf50"/><path d="M3 8a14 14 0 0 1 24.500 0L15 9l-6 8z" fill="#dd3a31"/><path d="M15 9h12.800A14 14 0 0 1 14 29l7-11z" fill="#fdd007"/><circle cx="15" cy="15" r="6.500" fill="#fff"/><circle cx="15" cy="15" r="5.200" fill="#2c74c8"/></svg></div>
 <div class="task run"><svg width="34" height="32"><path d="M6 1h23v28H1V6z" fill="#d6f0f8" stroke="#2c97b8"/><path d="M8 6v13h9" fill="none" stroke="#14619b" stroke-width="5"/><path d="M14 17q4-5 10-3l3 5M26 24q-6 4-12-3" fill="none" stroke="#3f9cc4" stroke-width="5"/><path d="M14 17q4-5 10-3l3 5M26 24q-6 4-12-3" fill="none" stroke="#b5e1f1" stroke-width="3"/><path d="M22.500 21.500h9v9h-9z" fill="#49c32c" stroke="#116e0c" stroke-width="1.500"/></svg></div>
 <div class="task run"><svg width="30" height="30"><use href="#braces"/></svg></div>
 <div class="task run"><svg width="30" height="30"><path d="M1 2h28v26H1z" fill="#c70d0f" stroke="#7e0507"/><path d="M3 2v26" stroke="#830508" stroke-width="3"/><path d="M7 24q8-4 10-17 0-3-2-1 0 10 10 13 3 2 0 2-10-3-18 3z" fill="none" stroke="#fff" stroke-width="1.500"/></svg></div>
 <div class="task run act"><svg width="30" height="30"><use href="#emulogo"/><text x="5" y="16.500" font-size="8.500" font-weight="700" font-family="Liberation Mono,monospace" fill="#fff" textLength="20">AND_</text></svg></div>
 <div class="tray ms-auto">
  <span style="color:#eef2f7;margin-top:-5px">ES</span>
  <svg width="9" height="5"><path d="M0 5h8L4 .5z" fill="#fff"/></svg>
  <svg width="17" height="16"><path d="M4.500 0v16" stroke="#fff" stroke-width="1.500"/><path d="M6 2h4q2 2 5 1v6H6z" fill="#fff" stroke="#445"/><circle cx="13.500" cy="10.500" r="4.700" fill="#d63027" stroke="#fff" stroke-width=".6"/><path d="M11.500 8.500l4 4M15.500 8.500l-4 4" stroke="#fff" stroke-width="1.500"/></svg>
  <svg width="18" height="16"><rect x="4" y="1.500" width="8" height="12.500" rx="1.500" fill="#7a8b9f" stroke="#fff" stroke-width="2"/><path d="M9 5h7v3q0 3-3.500 3T9 8zM10.500 2v3M14.500 2v3M12.500 11v4" fill="#fff" stroke="#fff" stroke-width="1.300"/></svg>
  <svg width="18" height="14"><path d="M4 10.500V13M7.500 9v4M11 7v6M14.500 4.500V13M18 2v11" stroke="#fff" stroke-width="2.300"/></svg>
  <svg width="18" height="16"><path d="M3 5.500h3L11 1.500v13l-5-4H3z" fill="#fff" stroke="#56657a" stroke-width=".7"/><path d="M13 5.500q2 2.500 0 5M15 4q3 4 0 8M17 2.500q3.500 5.500 0 11" fill="none" stroke="#fff"/></svg>
  <div class="text-center" style="padding-left:4px;letter-spacing:-.35px">10:46 AM<br>3/26/2014</div>
  <div class="peek"></div>
 </div>
</footer>
</body>
</html>
